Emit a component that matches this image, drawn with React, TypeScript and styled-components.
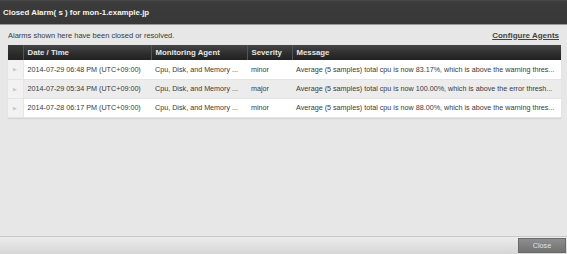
import styled, { createGlobalStyle } from 'styled-components'

const GlobalStyle = createGlobalStyle`
  html, body {
    margin: 0;
    padding: 0;
    background: #e6e6e6;
  }
  body {
    font-family: 'Liberation Sans', Arial, sans-serif;
  }
`

const Dialog = styled.div`
  width: 567px;
  height: 254px;
  display: flex;
  flex-direction: column;
  background: #e7e7e7;
  overflow: hidden;
`

const TitleBar = styled.div`
  height: 24px;
  flex: none;
  display: flex;
  align-items: center;
  padding-left: 3px;
  background: linear-gradient(#4a4a4a 0, #3b3b3b 2px, #383838 100%);
  border-bottom: 1px solid #9a9a9a;
  color: #f4f4f4;
  font-size: 7.9px;
  font-weight: bold;
`

const Body = styled.div`
  flex: 1;
  padding: 0 6px 0 8px;
`

const Toolbar = styled.div`
  height: 20px;
  display: flex;
  align-items: center;
  justify-content: space-between;
  padding-right: 2px;
  font-size: 7.5px;
  color: #3a3a3a;
`

const ConfigLink = styled.a`
  font-size: 8px;
  font-weight: bold;
  color: #444;
  text-decoration: underline;
  cursor: pointer;
`

const Table = styled.table`
  width: 553px;
  border-collapse: collapse;
  table-layout: fixed;
  background: #fff;
  box-shadow: 0 1px 1px rgba(0, 0, 0, 0.08);
`

const HeadCell = styled.th<{ $w?: number }>`
  box-sizing: border-box;
  width: ${p => (p.$w ? `${p.$w}px` : 'auto')};
  height: 15px;
  padding: 0 0 0 4px;
  text-align: left;
  font-size: 7.8px;
  font-weight: bold;
  color: #e6e6e6;
  background: linear-gradient(#464646, #2c2c2c 60%, #222);
  border-left: 1px solid #555;
  &:first-child {
    border-left: none;
    background: linear-gradient(#3a3a3a, #222);
  }
`

const Row = styled.tr<{ $alt?: boolean }>`
  background: ${p => (p.$alt ? '#ececec' : '#fff')};
`

const Cell = styled.td`
  box-sizing: border-box;
  height: 19px;
  padding: 0 0 0 4px;
  font-size: 7.2px;
  color: #3a3a3a;
  white-space: nowrap;
  overflow: hidden;
  border-bottom: 1px solid #e4e4e4;
`

const ExpandCell = styled.td`
  box-sizing: border-box;
  height: 19px;
  padding: 0;
  text-align: center;
  font-size: 5px;
  color: #c8c8c8;
  background: #f2f2f2;
  border-right: 1px solid #e6e6e6;
  border-bottom: 1px solid #e4e4e4;
`

const Footer = styled.div`
  height: 17px;
  flex: none;
  display: flex;
  justify-content: flex-end;
  align-items: center;
  padding-right: 1px;
  border-top: 1px solid #c9c9c9;
  background: linear-gradient(#ececec, #d6d6d6);
`

const CloseButton = styled.button`
  width: 48px;
  height: 15px;
  padding: 0;
  border: 1px solid #6a6a6a;
  background: linear-gradient(#8e8e8e, #727272);
  color: #e2e2e2;
  font-family: 'Liberation Sans', Arial, sans-serif;
  font-size: 7.2px;
`

const alarms = [
  {
    time: '2014-07-29 06:48 PM (UTC+09:00)',
    agent: 'Cpu, Disk, and Memory ...',
    severity: 'minor',
    message: 'Average (5 samples) total cpu is now 83.17%, which is above the warning thres...',
  },
  {
    time: '2014-07-29 05:34 PM (UTC+09:00)',
    agent: 'Cpu, Disk, and Memory ...',
    severity: 'major',
    message: 'Average (5 samples) total cpu is now 100.00%, which is above the error thresh...',
  },
  {
    time: '2014-07-28 06:17 PM (UTC+09:00)',
    agent: 'Cpu, Disk, and Memory ...',
    severity: 'minor',
    message: 'Average (5 samples) total cpu is now 88.00%, which is above the warning thres...',
  },
]

function App() {
  return (
    <>
      <GlobalStyle />
      <Dialog>
        <TitleBar>Closed Alarm( s ) for mon-1.example.jp</TitleBar>
        <Body>
          <Toolbar>
            <span>Alarms shown here have been closed or resolved.</span>
            <ConfigLink>Configure Agents</ConfigLink>
          </Toolbar>
          <Table>
            <thead>
              <tr>
                <HeadCell $w={15} />
                <HeadCell $w={128}>Date / Time</HeadCell>
                <HeadCell $w={96}>Monitoring Agent</HeadCell>
                <HeadCell $w={45}>Severity</HeadCell>
                <HeadCell>Message</HeadCell>
              </tr>
            </thead>
            <tbody>
              {alarms.map((a, i) => (
                <Row key={i} $alt={i % 2 === 1}>
                  <ExpandCell>▶</ExpandCell>
                  <Cell>{a.time}</Cell>
                  <Cell>{a.agent}</Cell>
                  <Cell>{a.severity}</Cell>
                  <Cell>{a.message}</Cell>
                </Row>
              ))}
            </tbody>
          </Table>
        </Body>
        <Footer>
          <CloseButton>Close</CloseButton>
        </Footer>
      </Dialog>
    </>
  )
}

export default App
